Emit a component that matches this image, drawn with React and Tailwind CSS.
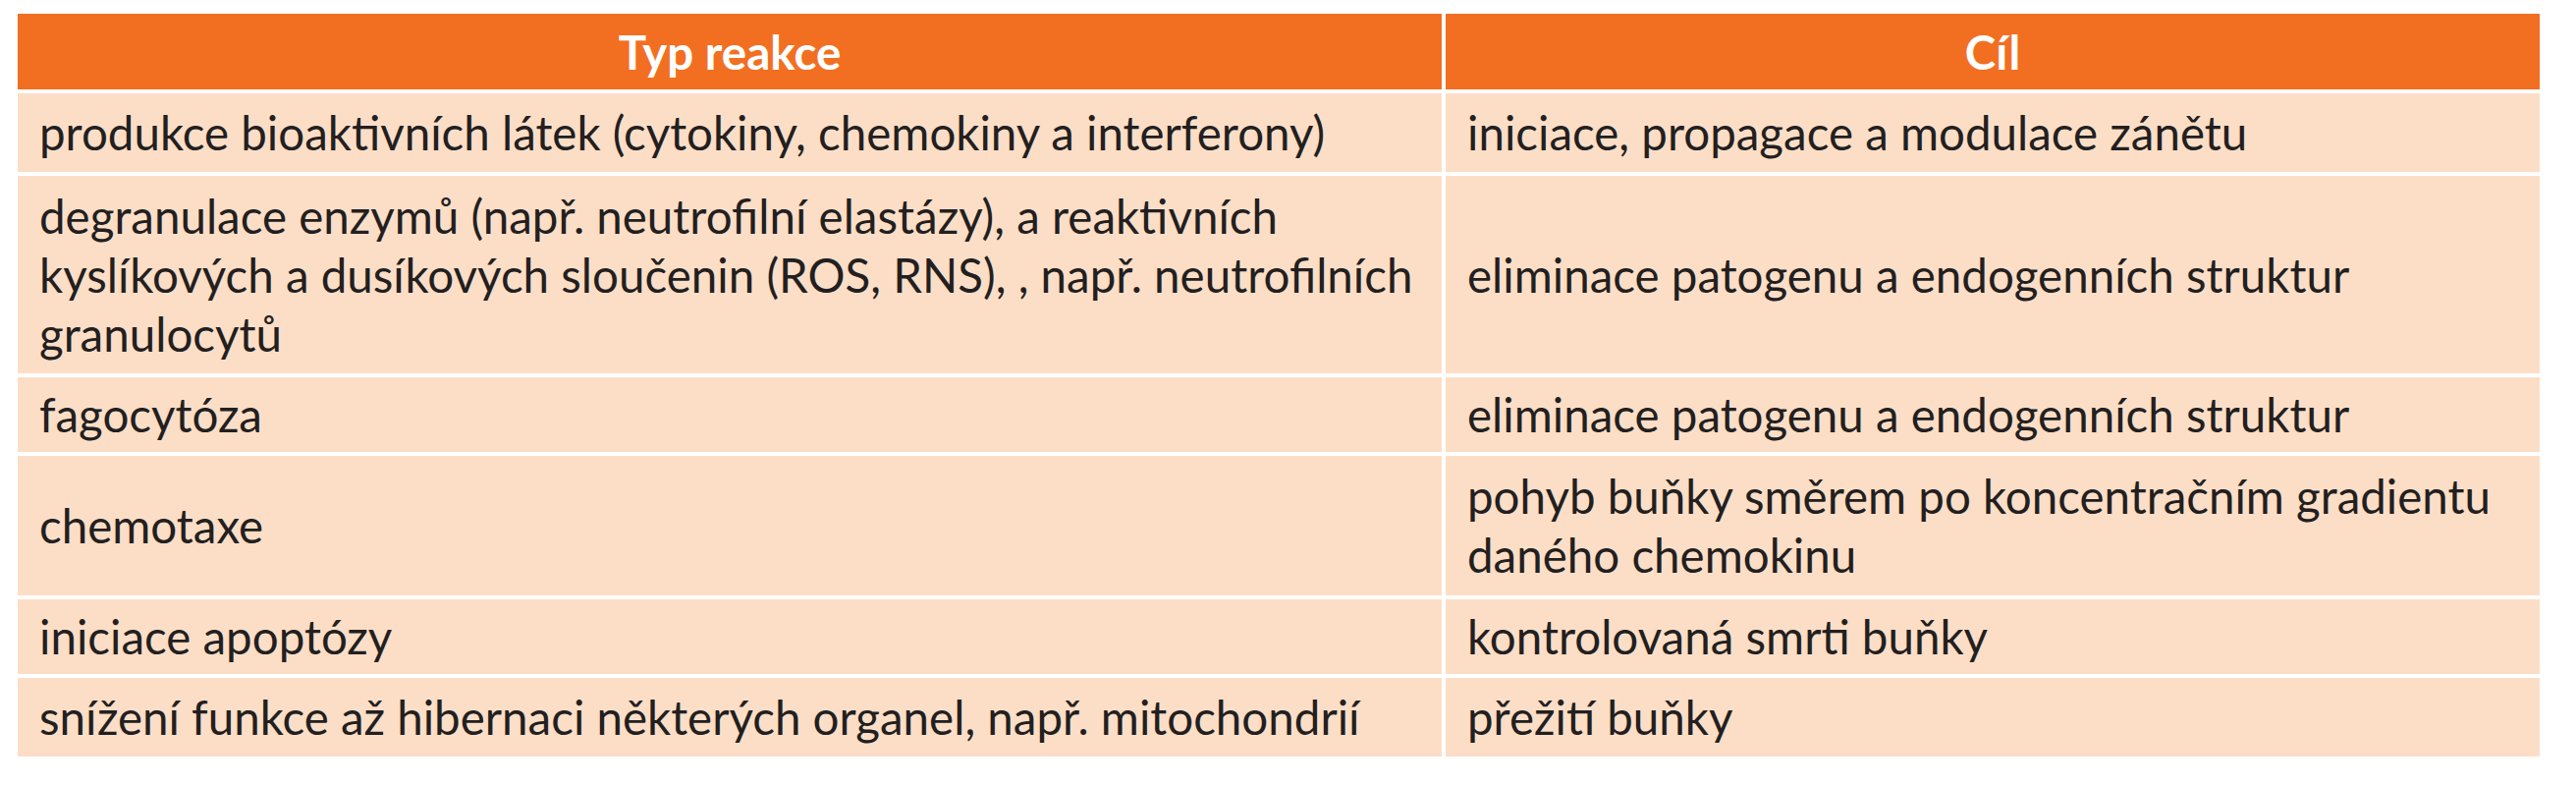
import { Fragment } from 'react'

const rows = [
  {
    reaction: ['produkce bioaktivních látek (cytokiny, chemokiny a interferony)'],
    target: ['iniciace, propagace a modulace zánětu'],
  },
  {
    reaction: [
      'degranulace enzymů (např. neutrofilní elastázy), a reaktivních',
      'kyslíkových a dusíkových sloučenin (ROS, RNS), , např. neutrofilních',
      'granulocytů',
    ],
    target: ['eliminace patogenu a endogenních struktur'],
  },
  {
    reaction: ['fagocytóza'],
    target: ['eliminace patogenu a endogenních struktur'],
  },
  {
    reaction: ['chemotaxe'],
    target: ['pohyb buňky směrem po koncentračním gradientu', 'daného chemokinu'],
  },
  {
    reaction: ['iniciace apoptózy'],
    target: ['kontrolovaná smrti buňky'],
  },
  {
    reaction: ['snížení funkce až hibernaci některých organel, např. mitochondrií'],
    target: ['přežití buňky'],
  },
]

function Cell({ lines }) {
  return (
    <div className="bg-[#fcdec7] px-[22px] flex flex-col justify-center">
      {lines.map((line, i) => (
        <span key={i} className="whitespace-nowrap leading-[60px]">
          {line}
        </span>
      ))}
    </div>
  )
}

export default function App() {
  return (
    <div className="min-h-screen bg-white pl-[18px] pt-[14px] font-['Lato',sans-serif] text-[47.5px] text-[#231f20]">
      <div className="grid grid-cols-[1450px_1114px] grid-rows-[77px_80px_201px_76px_142px_76px_80px] gap-[4px] w-fit">
        {/* Header */}
        <div className="bg-[#f26f22] flex items-center justify-center font-bold text-white">Typ reakce</div>
        <div className="bg-[#f26f22] flex items-center justify-center font-bold text-white">Cíl</div>

        {rows.map((row, i) => (
          <Fragment key={i}>
            <Cell lines={row.reaction} />
            <Cell lines={row.target} />
          </Fragment>
        ))}
      </div>
    </div>
  )
}
